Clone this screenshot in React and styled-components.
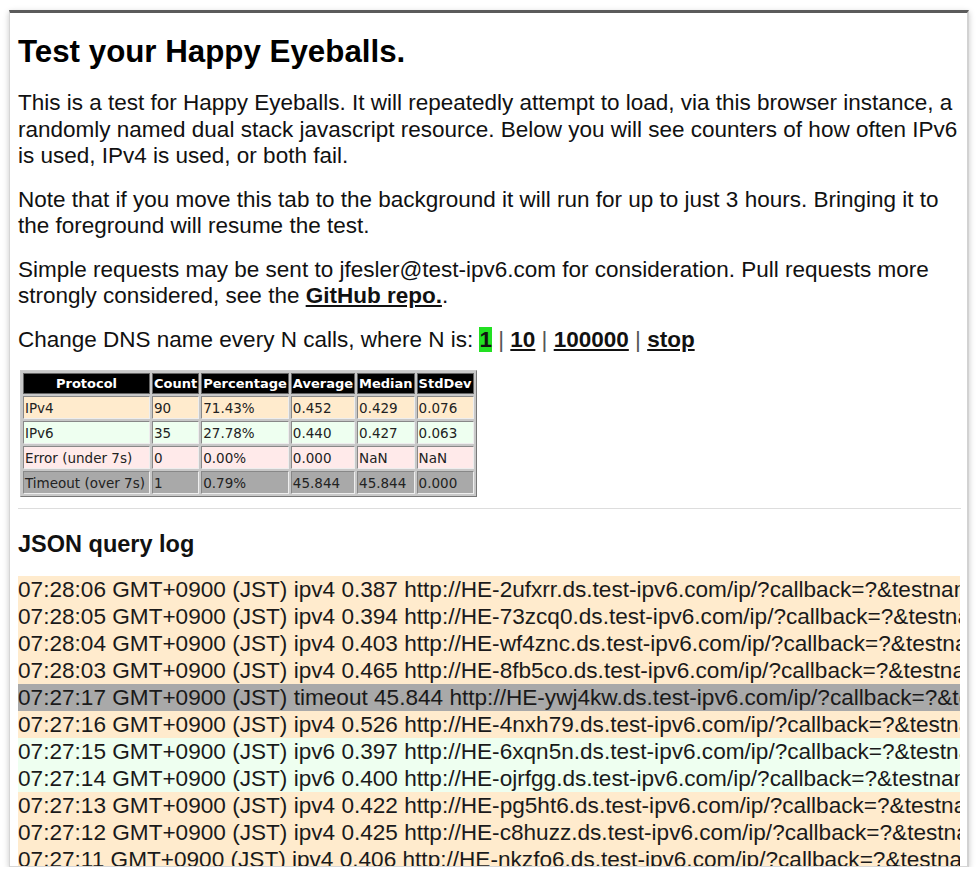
import React from "react";
import styled, { createGlobalStyle } from "styled-components";

const GlobalStyle = createGlobalStyle`
  html, body { margin: 0; padding: 0; background: #fff; }
  body { font-family: "Liberation Sans", Arial, sans-serif; color: #111; }
`;

const Window = styled.div`
  box-sizing: border-box;
  margin: 10px 0 0 9px;
  width: 960px;
  height: 857px;
  border-top: 3px solid #5b5b5b;
  border-left: 1px solid #d6d6d6;
  border-right: 2px solid #d2d2d2;
  border-bottom: 1px solid #d6d6d6;
  box-shadow: 0 2px 6px rgba(0, 0, 0, 0.22);
  overflow: hidden;
  padding: 0 4px 0 8px;
`;

const Heading = styled.h1`
  margin: 20px 0 0;
  font-size: 31.3px;
  line-height: 37px;
  font-weight: bold;
  color: #000;
`;

const Para = styled.p`
  margin: 20px 0 0;
  font-size: 22.5px;
  line-height: 26.5px;
  color: #111;
  & + & { margin-top: 17px; }
`;

const RepoLink = styled.a`
  font-weight: bold;
  color: #111;
  text-decoration: underline;
`;

const DnsLine = styled.p`
  margin: 17px 0 0;
  font-size: 22.5px;
  line-height: 26.5px;
  color: #111;
`;

const NLink = styled.a`
  font-weight: bold;
  color: #111;
  background: ${(p) => (p.$active ? "#22e022" : "transparent")};
  text-decoration: ${(p) => (p.$active ? "none" : "underline")};
`;

const Sep = styled.span`
  color: #555;
`;

const StatsTable = styled.table`
  margin: 17px 0 0 2px;
  border-collapse: separate;
  border-spacing: 2px;
  border: 1px solid;
  border-color: #ccc #777 #777 #ccc;
  background: #c8c8c8;
  font-family: "DejaVu Sans", Verdana, sans-serif;
  font-size: 13.5px;
  color: #222;
`;

const HeadCell = styled.th`
  background: #000;
  color: #fff;
  font-weight: bold;
  font-size: 13px;
  height: 19px;
  padding: 0 1px;
  white-space: nowrap;
  text-align: center;
  border: 1px solid #666;
`;

const rowBg = {
  ipv4: "#ffebcd",
  ipv6: "#eefff0",
  error: "#ffeaea",
  timeout: "#a9a9a9",
};

const Cell = styled.td`
  background: ${(p) => rowBg[p.$kind]};
  height: 21px;
  padding: 0 1px;
  white-space: nowrap;
  text-align: left;
  border: 1px solid;
  border-color: #888 #eee #eee #888;
`;

const Rule = styled.hr`
  margin: 11px 2px 0 0;
  border: 0;
  border-top: 1px solid #ddd;
  height: 0;
`;

const LogTitle = styled.h3`
  margin: 22px 0 0;
  font-size: 23.5px;
  line-height: 27px;
  font-weight: bold;
  color: #111;
`;

const Log = styled.div`
  margin-top: 18px;
  width: 942px;
  overflow: hidden;
`;

const LogRow = styled.div`
  background: ${(p) => rowBg[p.$kind]};
  font-size: 22.6px;
  line-height: 27px;
  white-space: nowrap;
  color: #1a1a1a;
`;

const stats = [
  ["ipv4", "IPv4", "90", "71.43%", "0.452", "0.429", "0.076"],
  ["ipv6", "IPv6", "35", "27.78%", "0.440", "0.427", "0.063"],
  ["error", "Error (under 7s)", "0", "0.00%", "0.000", "NaN", "NaN"],
  ["timeout", "Timeout (over 7s)", "1", "0.79%", "45.844", "45.844", "0.000"],
];

const logs = [
  ["ipv4", "07:28:06", "ipv4 0.387", "2ufxrr"],
  ["ipv4", "07:28:05", "ipv4 0.394", "73zcq0"],
  ["ipv4", "07:28:04", "ipv4 0.403", "wf4znc"],
  ["ipv4", "07:28:03", "ipv4 0.465", "8fb5co"],
  ["timeout", "07:27:17", "timeout 45.844", "ywj4kw"],
  ["ipv4", "07:27:16", "ipv4 0.526", "4nxh79"],
  ["ipv6", "07:27:15", "ipv6 0.397", "6xqn5n"],
  ["ipv6", "07:27:14", "ipv6 0.400", "ojrfgg"],
  ["ipv4", "07:27:13", "ipv4 0.422", "pg5ht6"],
  ["ipv4", "07:27:12", "ipv4 0.425", "c8huzz"],
  ["ipv4", "07:27:11", "ipv4 0.406", "nkzfo6"],
  ["ipv4", "07:27:10", "ipv4 0.412", "q2mxa1"],
];

export default function App() {
  return (
    <>
      <GlobalStyle />
      <Window>
        <Heading>Test your Happy Eyeballs.</Heading>
        <Para>
          This is a test for Happy Eyeballs. It will repeatedly attempt to load, via this browser
          instance, a randomly named dual stack javascript resource. Below you will see counters of
          how often IPv6 is used, IPv4 is used, or both fail.
        </Para>
        <Para>
          Note that if you move this tab to the background it will run for up to just 3 hours.
          Bringing it to the foreground will resume the test.
        </Para>
        <Para>
          Simple requests may be sent to jfesler@test-ipv6.com for consideration. Pull requests more
          strongly considered, see the <RepoLink href="#">GitHub repo.</RepoLink>.
        </Para>
        <DnsLine>
          Change DNS name every N calls, where N is: <NLink href="#" $active>1</NLink>
          <Sep> | </Sep>
          <NLink href="#">10</NLink>
          <Sep> | </Sep>
          <NLink href="#">100000</NLink>
          <Sep> | </Sep>
          <NLink href="#">stop</NLink>
        </DnsLine>
        <StatsTable>
          <thead>
            <tr>
              <HeadCell style={{ width: 123 }}>Protocol</HeadCell>
              <HeadCell>Count</HeadCell>
              <HeadCell>Percentage</HeadCell>
              <HeadCell>Average</HeadCell>
              <HeadCell>Median</HeadCell>
              <HeadCell>StdDev</HeadCell>
            </tr>
          </thead>
          <tbody>
            {stats.map(([kind, ...cells]) => (
              <tr key={kind}>
                {cells.map((c, i) => (
                  <Cell key={i} $kind={kind}>{c}</Cell>
                ))}
              </tr>
            ))}
          </tbody>
        </StatsTable>
        <Rule />
        <LogTitle>JSON query log</LogTitle>
        <Log>
          {logs.map(([kind, time, result, host]) => (
            <LogRow key={time} $kind={kind}>
              {time} GMT+0900 (JST) {result} http://HE-{host}.ds.test-ipv6.com/ip/?callback=?&amp;testname=test_dns
            </LogRow>
          ))}
        </Log>
      </Window>
    </>
  );
}
